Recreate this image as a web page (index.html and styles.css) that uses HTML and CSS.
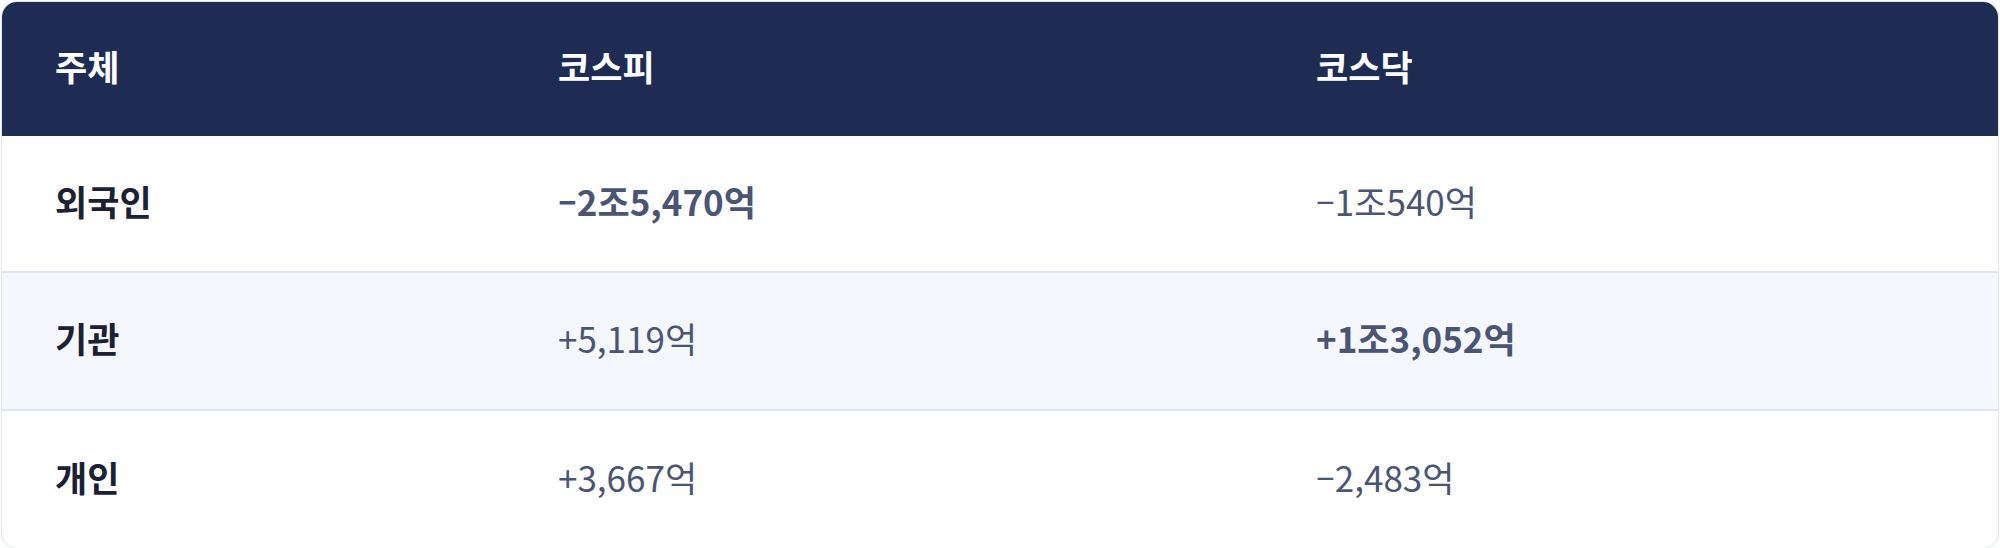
FILE: index.html
```html
<!DOCTYPE html>
<html lang="ko">
<head>
<meta charset="utf-8">
<link rel="stylesheet" href="styles.css">
</head>
<body>
<div class="card">
  <div class="row head">
    <div class="cell">주체</div>
    <div class="cell">코스피</div>
    <div class="cell">코스닥</div>
  </div>
  <div class="row">
    <div class="cell label">외국인</div>
    <div class="cell val strong">–2조5,470억</div>
    <div class="cell val">–1조540억</div>
  </div>
  <div class="row alt">
    <div class="cell label">기관</div>
    <div class="cell val">+5,119억</div>
    <div class="cell val strong">+1조3,052억</div>
  </div>
  <div class="row last">
    <div class="cell label">개인</div>
    <div class="cell val">+3,667억</div>
    <div class="cell val">–2,483억</div>
  </div>
</div>
</body>
</html>
```

FILE: styles.css
```css
html, body {
  margin: 0;
  padding: 0;
  background: #ffffff;
}
body {
  padding: 1px;
  font-family: "Noto Sans CJK KR", "Noto Sans", sans-serif;
}
.card {
  border: 1.5px solid #dfe5f1;
  border-radius: 16px;
  overflow: hidden;
  background: #ffffff;
}
.row {
  display: grid;
  grid-template-columns: 503px 758px 1fr;
  align-items: center;
  height: 135px;
  border-bottom: 2px solid #dfe5f1;
  font-size: 35px;
}
.row.head {
  height: 134px;
  background: #1e2c54;
  color: #ffffff;
  font-weight: 700;
  border-bottom: none;
}
.row.alt {
  height: 136px;
  background: #f4f7fc;
}
.row.last {
  border-bottom: none;
  height: 137px;
}
.cell {
  padding-left: 53px;
  padding-bottom: 6px;
  line-height: 1.2;
}
.label {
  font-weight: 700;
  color: #1b2033;
}
.val {
  color: #4a5574;
  font-weight: 400;
}
.val.strong {
  font-weight: 700;
}
```
